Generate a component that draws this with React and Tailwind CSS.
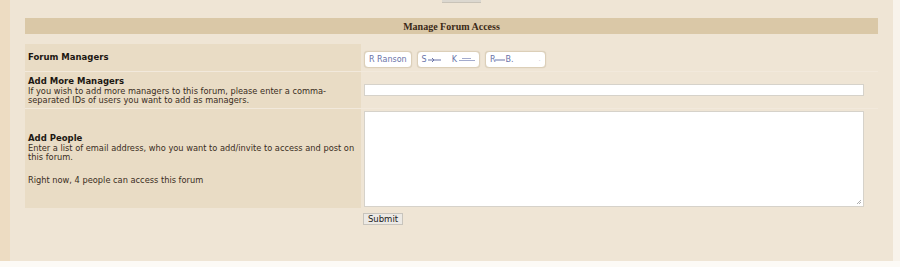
export default function App() {
  return (
    <div className="w-[900px] h-[267px] bg-[#fcfaf6] overflow-hidden" style={{ fontFamily: '"DejaVu Sans", Verdana, sans-serif' }}>
      <div className="flex h-[261px]">
        <div className="w-[10px] bg-[#eddcc2]"></div>
        <div className="w-[883px] bg-[#efe5d5] pl-[15px] pr-[15px]">
          {/* leftover of the button above */}
          <div className="ml-[417px] w-[39px] h-[3px] bg-[#dcd8d0] border-b border-[#c9c3b8]"></div>

          <div className="mt-[15px] h-[16px] bg-[#dac8a7] flex items-center justify-center text-[10px] font-bold text-[#3b2a17]" style={{ fontFamily: '"Liberation Serif", "Times New Roman", serif' }}>
            Manage Forum Access
          </div>

          <div className="mt-[10px] grid grid-cols-[336px_517px] gap-y-[1px] bg-[#f2e9dc]">
            <div className="h-[27px] bg-[#e9dcc5] flex items-center pl-[3px] text-[8.5px] font-bold text-[#1c1712]">Forum Managers</div>
            <div className="h-[27px] bg-[#efe5d5] flex items-center pl-[3px] pt-[4px] gap-[5px]">
              <Chip><span>R Ranson</span></Chip>
              <Chip>
                <span>S</span>
                <svg width="13" height="6" className="ml-[1px]"><path d="M0 3 H13 M4 1 L6 3 L4 5" stroke="#6a74a8" strokeWidth="1" fill="none" /></svg>
                <span className="ml-[11px]">K</span>
                <svg width="16" height="6" className="ml-[2px]"><path d="M0 3.5 H16 M3 1.5 H12" stroke="#8c95c0" strokeWidth="0.8" fill="none" /></svg>
              </Chip>
              <Chip>
                <span>R</span>
                <svg width="10" height="6"><path d="M0 3 H10" stroke="#6a74a8" strokeWidth="1" fill="none" /></svg>
                <span>B.</span>
                <span className="ml-[25px] text-[#c8c8d8] text-[7px]">.</span>
              </Chip>
            </div>

            <div className="h-[36px] bg-[#e9dcc5] flex flex-col justify-center pl-[3px] pt-[1px] text-[#3a2d22]">
              <div className="text-[8.5px] font-bold text-[#1c1712] leading-[11px]">Add More Managers</div>
              <div className="text-[8.25px] leading-[9px]">If you wish to add more managers to this forum, please enter a comma-<br />separated IDs of users you want to add as managers.</div>
            </div>
            <div className="h-[36px] bg-[#efe5d5] flex items-center pl-[3px]">
              <div className="w-[500px] h-[12px] bg-white border border-[#d6d2ca]"></div>
            </div>

            <div className="h-[99px] bg-[#e9dcc5] flex flex-col justify-center pl-[3px] text-[#3a2d22]">
              <div className="text-[8.5px] font-bold text-[#1c1712] leading-[11px]">Add People</div>
              <div className="text-[8.25px] leading-[9px]">Enter a list of email address, who you want to add/invite to access and post on<br />this forum.</div>
              <div className="text-[8.25px] leading-[9px] mt-[14px]">Right now, 4 people can access this forum</div>
            </div>
            <div className="h-[99px] bg-[#efe5d5] pl-[3px] pt-[2px]">
              <div className="relative w-[500px] h-[96px] bg-white border border-[#d6d2ca]">
                <svg width="6" height="6" className="absolute right-[1px] bottom-[1px]"><path d="M1 5 L5 1 M3 5 L5 3" stroke="#9a9a9a" strokeWidth="0.8" /></svg>
              </div>
            </div>
          </div>

          <div className="ml-[338px] mt-[5px] w-[40px] h-[12px] bg-[#ece9e4] border border-[#c8c4bc] flex items-center justify-center text-[8.5px] text-[#222]">Submit</div>
        </div>
        <div className="w-[7px] bg-[#f8f3eb]"></div>
      </div>
    </div>
  );
}

function Chip({ children }) {
  return (
    <div className="h-[17px] px-[4px] bg-white rounded-[4px] border border-[#dccfb8] shadow-[0_0_1px_#cbbfa8] flex items-center text-[8px] text-[#6a74a8]">
      {children}
    </div>
  );
}
